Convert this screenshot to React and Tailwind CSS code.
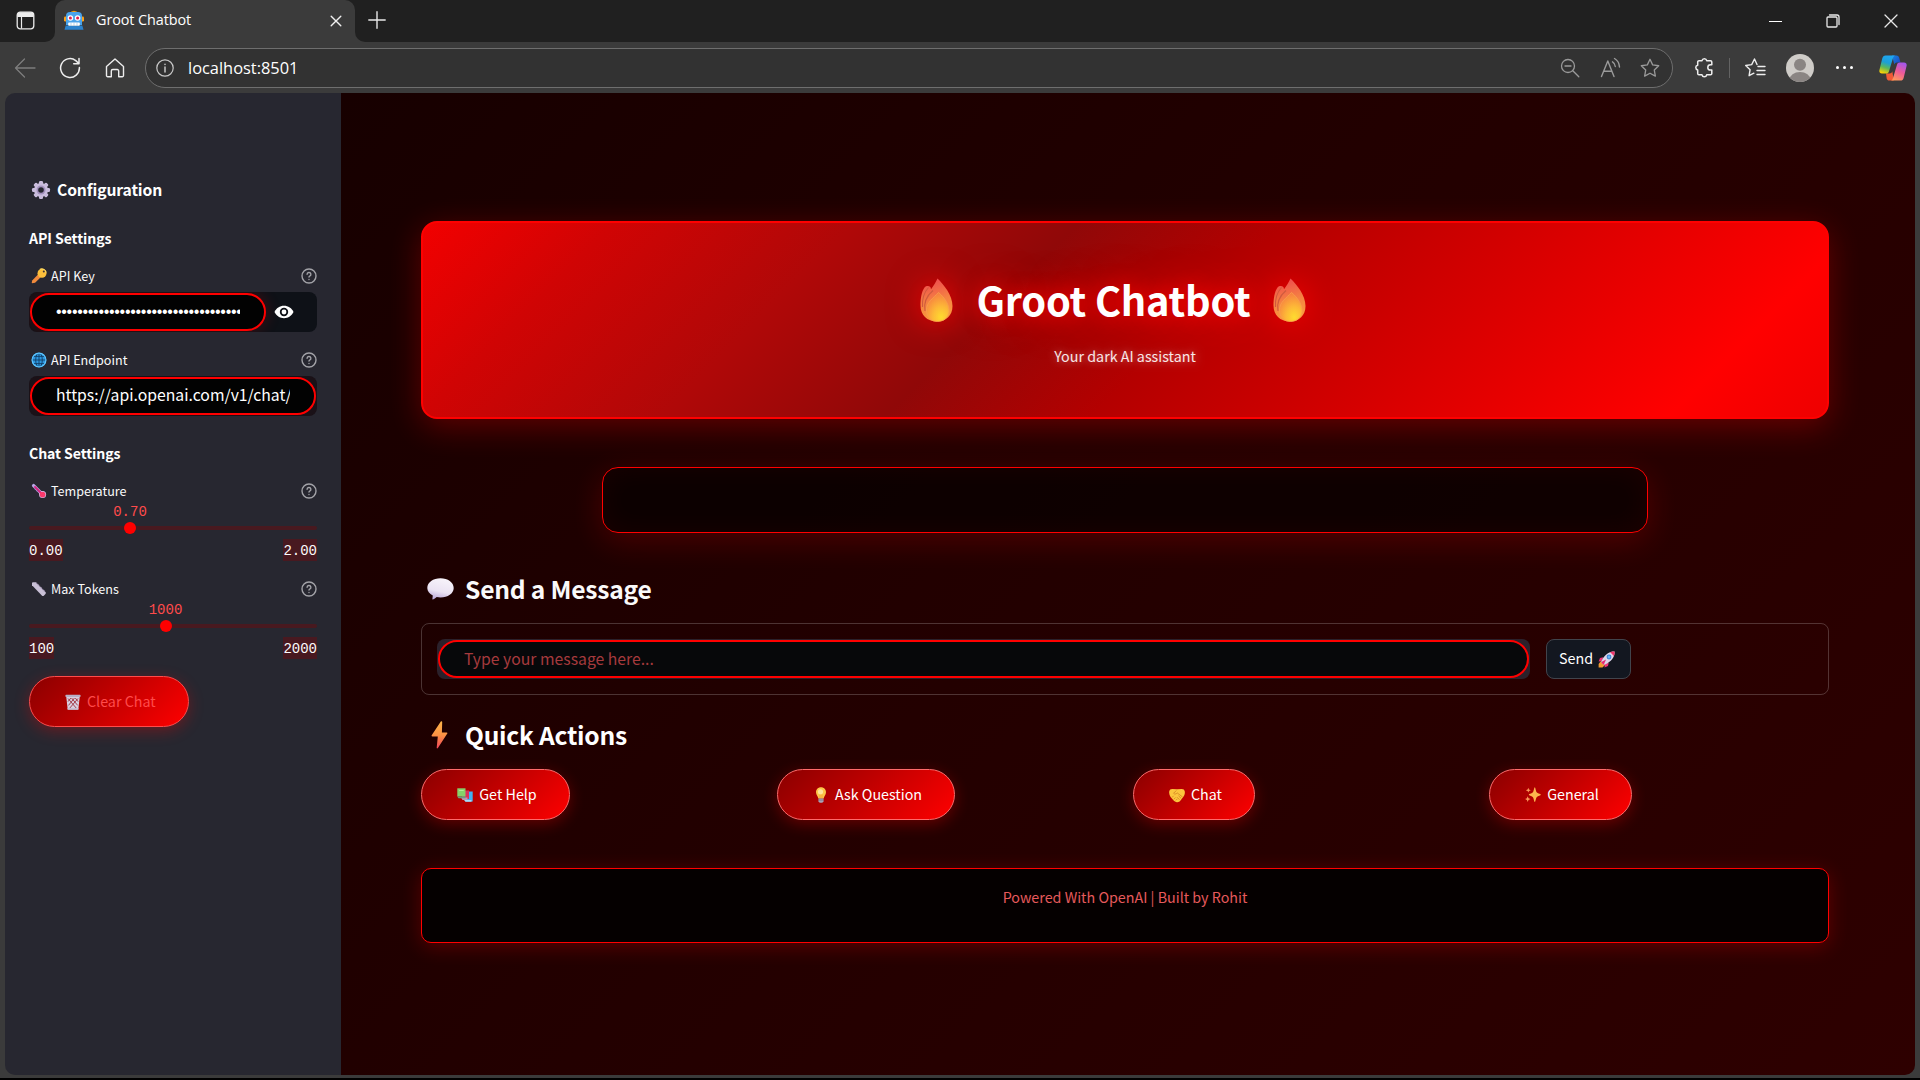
import React from "react";

const SANS = "font-['Noto_Sans_CJK_SC','Noto_Sans',sans-serif]";
const UI = "font-['Open_Sans','Noto_Sans',sans-serif]";
const MONO = "font-['Liberation_Mono',monospace]";

/* ---------- emoji drawings ---------- */

function Robot({ className }) {
  return (
    <svg viewBox="0 0 20 20" className={className}>
      <path d="M5 3.5Q10-2 15 3.5z" fill="#f59e0b" />
      <rect x="0" y="6.5" width="3" height="5" rx="1.2" fill="#f9a01b" />
      <rect x="17" y="6.5" width="3" height="5" rx="1.2" fill="#f9a01b" />
      <path d="M2 6a4 4 0 0 1 4-4h8a4 4 0 0 1 4 4v9H2z" fill="#4aa3ea" />
      <path d="M.5 19.8l1.2-4.2h16.6l1.2 4.2z" fill="#2b82cc" />
      <circle cx="6.4" cy="8" r="2.8" fill="#fff" />
      <circle cx="13.6" cy="8" r="2.8" fill="#fff" />
      <circle cx="6.4" cy="8" r="1.5" fill="#e11d48" />
      <circle cx="13.6" cy="8" r="1.5" fill="#e11d48" />
      <rect x="4.2" y="12.6" width="11.6" height="3.2" rx=".8" fill="#fff" />
      <path d="M7 12.6v3.2M10 12.6v3.2M13 12.6v3.2" stroke="#8ab8dd" strokeWidth=".6" />
    </svg>
  );
}

function Gear({ className }) {
  return (
    <svg viewBox="0 0 20 20" className={className}>
      <g fill="#c9bcdc">
        {[0, 45, 90, 135].map((a) => (
          <rect key={a} x="8" y="1" width="4" height="18" rx="1.2" transform={`rotate(${a} 10 10)`} />
        ))}
        <circle cx="10" cy="10" r="7" />
      </g>
      <circle cx="10" cy="10" r="4.5" fill="#a391bd" />
      <circle cx="10" cy="10" r="2.8" fill="#272730" />
    </svg>
  );
}

function Key({ className }) {
  return (
    <svg viewBox="0 0 16 16" className={className}>
      <path d="M7.500 6l2.700 2.700-6.100 6.100-2.900.5-.5-.6.5-2.200z" fill="#f08a3c" />
      <circle cx="11" cy="5.200" r="4.500" fill="#fcbf3b" />
      <path d="M9 1.200a4.600 4.600 0 0 1 6.200 3.400" stroke="#ffd95e" strokeWidth="1.2" fill="none" />
      <circle cx="12.800" cy="3.500" r="1" fill="#3a3138" />
    </svg>
  );
}

function Globe({ className }) {
  return (
    <svg viewBox="0 0 16 16" className={className}>
      <circle cx="8" cy="8" r="7.3" fill="#2d97df" />
      <g fill="none" stroke="#123f66" strokeWidth=".9">
        <ellipse cx="8" cy="8" rx="3.3" ry="7.2" />
        <path d="M8 .8v14.4M.8 8h14.4M2 4.4h12M2 11.6h12" />
      </g>
      <circle cx="8" cy="8" r="6.900" fill="none" stroke="#5ec6ff" strokeWidth="1.200" />
    </svg>
  );
}

function Thermometer({ className }) {
  return (
    <svg viewBox="0 0 16 16" className={className}>
      <path d="M2.6 2.6L11 11" stroke="#b9a4e6" strokeWidth="3.400" strokeLinecap="round" />
      <circle cx="11.6" cy="11.6" r="3.500" fill="#d9c8f5" />
      <path d="M4 4L11 11" stroke="#d9247f" strokeWidth="1.900" strokeLinecap="round" />
      <circle cx="11.6" cy="11.6" r="2.900" fill="#fa3a6c" />
      <path d="M3.4 6.2l1.2-1M5.6 8.4l1.2-1" stroke="#6d4f9c" strokeWidth=".8" />
    </svg>
  );
}

function Ruler({ className }) {
  return (
    <svg viewBox="0 0 16 16" className={className}>
      <path d="M1.6 1.3h3.3l9.8 9.9v1.6l-2.2 2.2h-1.2L1 4.2V2z" fill="#c9c0d6" />
      <path d="M5.2 1.8l9.2 9.3" stroke="#9587a8" strokeWidth="1.2" strokeDasharray="1 1.2" />
    </svg>
  );
}

function Basket({ className }) {
  return (
    <svg viewBox="0 0 16 16" className={className}>
      <path d="M1.2 2.2h13.6l-1.5 13.2H2.7z" fill="#d8cfe0" />
      <path d="M3 4.5l8.600 10M6.500 4l6.200 7.400M10.300 4l2.800 3.600M13 4.500l-8.600 10M9.500 4l-6 7.400M5.800 4L3 7.600" stroke="#9c2836" strokeWidth=".85" />
      <rect x=".4" y=".8" width="15.2" height="2.2" rx=".8" fill="#b9afc6" />
      <rect x="2.5" y="14" width="11" height="1.7" rx=".6" fill="#c9bfd2" />
    </svg>
  );
}

function Fire({ className, id }) {
  return (
    <svg viewBox="0 0 33 44" className={className}>
      <defs>
        <linearGradient id={`${id}a`} x1=".4" y1="0" x2=".6" y2="1">
          <stop offset="0" stopColor="#ee4a4f" />
          <stop offset=".5" stopColor="#f58142" />
          <stop offset="1" stopColor="#fb9f3c" />
        </linearGradient>
        <radialGradient id={`${id}b`} cx=".65" cy=".85" r=".8">
          <stop offset="0" stopColor="#fedb2f" />
          <stop offset=".45" stopColor="#fdb937" />
          <stop offset="1" stopColor="#f78440" />
        </radialGradient>
      </defs>
      <path d="M17.500.5C24 7 32.500 17 32.500 28c0 9.500-6.500 15.500-15.500 15.500C7 43.500.5 37 .5 27.500.5 21 1.500 13.500 4.500 9.500c2-2 4.500-1.700 6-.2.300.7.400 1.200.5 1.900C13.500 8 15.500 4.500 17.500.5z" fill={`url(#${id}a)`} />
      <path d="M8.500 9.500C3.500 15 2 22 2.500 29M13 12.500C6.500 18 3.500 25 5 33" stroke="#cf5a3e" strokeWidth="1.100" fill="none" />
      <path d="M18.500 14.500C25 20 29.500 27 29 33.500c-.5 6-5 10-11.500 10S6.500 39 6.500 32c0-8 7-12 12-17.500z" fill={`url(#${id}b)`} stroke="#f9a04c" strokeWidth=".8" />
    </svg>
  );
}

function Bubble({ className }) {
  return (
    <svg viewBox="0 0 27 22" className={className}>
      <defs>
        <linearGradient id="bub" x1=".6" y1="0" x2=".3" y2="1">
          <stop offset="0" stopColor="#f7f3fa" />
          <stop offset=".6" stopColor="#ebe3f3" />
          <stop offset="1" stopColor="#b9a5d8" />
        </linearGradient>
      </defs>
      <path d="M13.500.3C20.800.3 26.700 4.500 26.700 10s-5.900 9.500-13.200 9.500c-1.300 0-2.600-.1-3.800-.4-1.200 1-2.500 2-3.700 2.400-.6.2-.8-.3-.6-.8l.4-3.200C2.400 15.800.3 13 .3 10 .3 4.500 6.200.3 13.500.3z" fill="url(#bub)" />
    </svg>
  );
}

function Bolt({ className }) {
  return (
    <svg viewBox="0 0 17 28" className={className}>
      <defs>
        <linearGradient id="blt" x1=".5" y1="0" x2=".5" y2="1">
          <stop offset="0" stopColor="#fdb54a" />
          <stop offset=".5" stopColor="#fb9344" />
          <stop offset="1" stopColor="#f0435a" />
        </linearGradient>
      </defs>
      <path d="M9.800.6L.7 14.300c-.4.700 0 1.200.7 1.200h5.400L5.700 26.800c0 .9.700 1 1.200.3l9.400-14.500c.4-.7.100-1.200-.7-1.200h-4.700L11.200 1c0-.9-.9-1.100-1.400-.4z" fill="url(#blt)" />
    </svg>
  );
}

function Books({ className }) {
  return (
    <svg viewBox="0 0 16 16" className={className}>
      <path d="M8.500 4.500H15.700V14.500H8.500z" fill="#3fb1f3" />
      <path d="M7 13h7.500v1.700H8.500z" fill="#a7dcf9" />
      <path d="M5 3.500h7V12H5z" fill="#dc2f5c" />
      <path d="M4 10.500h6.500V13H5.500z" fill="#b89ab8" />
      <path d="M.3 1.300h8.200v8.200H.3z" fill="#86d169" />
      <path d="M.3 9.500h8.200V11.200H1.500z" fill="#6b9f80" />
      <path d="M2.200 3.500h4.500" stroke="#b2eb97" strokeWidth="1" />
    </svg>
  );
}

function Bulb({ className }) {
  return (
    <svg viewBox="0 0 16 16" className={className}>
      <path d="M8 .2c3 0 5 2.200 5 5 0 2.600-2 4-2.400 6.300H5.400C5 9.200 3 7.800 3 5.200 3 2.400 5 .2 8 .2z" fill="#fcc648" />
      <circle cx="7.500" cy="4.800" r="2.600" fill="#ffe59a" />
      <path d="M7 11V7.500M9 11V7.500" stroke="#f19b33" strokeWidth=".7" />
      <path d="M5.500 11.500h5v3L9.300 15.800H6.700L5.500 14.500z" fill="#a9a3b6" />
      <path d="M5.500 13h5" stroke="#726a83" strokeWidth=".8" />
    </svg>
  );
}

function Handshake({ className }) {
  return (
    <svg viewBox="0 0 16 16" className={className}>
      <path d="M.2 4.500C.5 2.800 1.600 2 3.200 2L8 2.300 12.800 2c1.600 0 2.700.8 3 2.500.3 2-.4 4-1.600 5.600l-2.700 3.400c-1 1.400-2.600 2-4.400 1.500-1.600-.5-2.900-1.700-4-3.200C1.300 9.800-.2 7.300.2 4.500z" fill="#fcc53d" />
      <path d="M7.300 3.500L4.600 6.300c.8 1.200 2.400.9 3.600-.4L13.500 10M3 10.500l1.600-1.700M4.800 12.300l1.800-1.800M6.900 13.300l1.500-1.500M9.500 8.800l2.800 2.700M8 10.200l2.500 2.500" stroke="#cf7f22" strokeWidth=".75" fill="none" />
    </svg>
  );
}

function Sparkles({ className }) {
  return (
    <svg viewBox="0 0 16 16" className={className}>
      <g fill="#fdb64c">
        <path d="M9.800.3c.7 0 .9 4 2.100 5.300 1.200 1.200 3.900 1.300 3.900 2.100s-2.700.9-3.900 2.200c-1.200 1.300-1.400 5-2.100 5s-.9-3.700-2.100-5C6.500 8.600 3.800 8.500 3.800 7.700s2.700-.9 3.900-2.100C8.900 4.300 9.100.3 9.800.3z" />
        <path d="M3.300.8l.7 1.700 1.800.7L4 3.900l-.7 1.700-.7-1.700-1.800-.7 1.800-.7z" fill="#fb9a5a" />
        <path d="M2.700 9.300l.8 2 2 .8-2 .8-.8 2-.8-2-1.800-.8 1.800-.8z" fill="#fb9a5a" />
      </g>
    </svg>
  );
}

function Rocket({ className }) {
  return (
    <svg viewBox="0 0 17 17" className={className}>
      <path d="M5.200 6.300L2 7 .6 10.500l3.500-.4zM10.700 11.800L10 15l-3.500 1.600.4-3.700z" fill="#ef3176" />
      <path d="M3 10l4 4-2.500 2.500L.6 16.600l0-3.600z" fill="#f59b31" />
      <path d="M16.600.4c-4.600-.2-8.300 1.700-12 7.400L3 11.300 5.700 14l3.500-1.600c5.700-3.700 7.600-7.400 7.400-12z" fill="#ded6ea" />
      <path d="M16.600.4c-1.700-.1-3.200.1-4.600.7l3.900 3.900c.6-1.400.8-2.900.7-4.600z" fill="#f2356b" />
      <circle cx="11" cy="6" r="2.400" fill="#3f83d4" />
      <circle cx="11" cy="6" r="1.400" fill="#66b6f5" />
      <path d="M3 11.300L8 8.500 5.700 14z" fill="#e82b72" />
    </svg>
  );
}

/* ---------- browser icons ---------- */

function Line({ children, size, className, w = 1.3 }) {
  return (
    <svg width={size} height={size} viewBox={`0 0 ${size} ${size}`} fill="none" stroke="currentColor" strokeWidth={w} strokeLinecap="round" strokeLinejoin="round" className={className}>
      {children}
    </svg>
  );
}

function Copilot() {
  return (
    <svg width="28" height="26" viewBox="0 0 28 26">
      <defs>
        <linearGradient id="cpa" x1=".6" y1="0" x2=".3" y2="1">
          <stop offset="0" stopColor="#1fa6f2" />
          <stop offset=".4" stopColor="#1c9fd6" />
          <stop offset=".68" stopColor="#5cb85a" />
          <stop offset="1" stopColor="#fbd104" />
        </linearGradient>
        <linearGradient id="cpb" x1=".7" y1="0" x2=".3" y2="1">
          <stop offset="0" stopColor="#a456ea" />
          <stop offset=".5" stopColor="#ee5b97" />
          <stop offset="1" stopColor="#ff9a5c" />
        </linearGradient>
        <linearGradient id="cpc" x1="0" y1="0" x2="1" y2="1">
          <stop offset="0" stopColor="#1787e0" />
          <stop offset="1" stopColor="#1e3fc0" />
        </linearGradient>
      </defs>
      <path d="M13 .4h4.300c1.500 0 2.400.8 2.800 2.200l1.400 4.900h-3.600c-1.300 0-2.200.8-2.600 2.100z" fill="url(#cpc)" />
      <path d="M7 18.500h3.500c1.500 0 2.300-.8 2.800-2.200l1.500 9.300h-4.500c-1.400 0-2.300-.8-2.600-2.100z" fill="#f25a36" />
      <path d="M6.600.4h9.700c-1.300.2-1.900 1.300-2.300 2.600l-4 13.200c-.4 1.400-1.300 2.300-2.800 2.300H3C.8 18.500-.1 17 .5 14.800L3.300 3.300C3.800 1.400 4.800.4 6.600.4z" fill="url(#cpa)" />
      <path d="M21.400 25.600h-9.700c1.300-.2 1.900-1.300 2.300-2.600l4-13.200c.4-1.400 1.300-2.300 2.800-2.300H25c2.200 0 3.100 1.500 2.500 3.700l-2.800 11.500c-.5 1.900-1.500 2.900-3.300 2.900z" fill="url(#cpb)" />
    </svg>
  );
}

function TitleBar() {
  return (
    <div className="flex h-[42px] shrink-0 bg-[#202020]">
      <div className="w-[55px] bg-[#3b3b3b]">
        <div className="flex h-full items-center rounded-br-[10px] bg-[#202020] pl-4 pb-0.5 text-[#ececec]">
          <svg width="19" height="19" viewBox="0 0 19 19" fill="none">
            <rect x="1.200" y="1.200" width="16.600" height="16.600" rx="3" stroke="currentColor" strokeWidth="1.300" />
            <path d="M1.200 4.200a3 3 0 0 1 3-3h10.600a3 3 0 0 1 3 3v1.800H1.200z" fill="currentColor" />
            <path d="M5.500 5v12.500" stroke="currentColor" strokeWidth="1.200" />
          </svg>
        </div>
      </div>
      <div className="w-[300px] bg-[#202020]">
        <div className="flex h-full items-center rounded-t-[10px] bg-[#3b3b3b] pl-[9px] pb-[3px] pr-[13px]">
          <Robot className="h-5 w-5" />
          <span className={`ml-3 flex-1 whitespace-nowrap text-[14.400px] leading-5 tracking-[-0.080px] text-white ${UI}`}>Groot Chatbot</span>
          <Line size={12} className="mt-0.5 text-[#f0f0f0]" w={1.4}><path d="M1.200 1.200l9.600 9.600M10.800 1.200L1.200 10.800" /></Line>
        </div>
      </div>
      <div className="flex-1 bg-[#3b3b3b]">
        <div className="flex h-full items-center rounded-bl-[10px] bg-[#202020] pl-[13px] text-[#e8e8e8]">
          <Line size={18} className="mb-[3px]" w={1.4}><path d="M9 .8v16.400M.8 9h16.400" /></Line>
          <div className="flex-1" />
          <div className="mr-[44px] h-[1px] w-[13px] bg-white" />
          <Line size={14} className="mr-[44px]" w={1.3}>
            <rect x="1" y="3" width="10" height="10" rx="1" />
            <path d="M3.500 1H11a2 2 0 0 1 2 2v7.500" />
          </Line>
          <Line size={14} className="mr-[22px]" w={1.3}><path d="M1 1l12 12M13 1L1 13" /></Line>
        </div>
      </div>
    </div>
  );
}

const STAR = "M10 1.300l2.650 5.600 6.050.850-4.400 4.300 1.070 6.100L10 15.250 4.630 18.150 5.700 12.050 1.300 7.750l6.050-.850z";

function Toolbar() {
  return (
    <div className="flex h-[51px] shrink-0 items-center bg-[#3b3b3b] pl-[14px] text-[#ededed]">
      <Line size={22} className="text-[#7d7d7d]" w={1.3}><path d="M21 11H1.500M10.500 2L1.500 11l9 9" /></Line>
      <Line size={22} className="ml-[23px]" w={1.5}>
        <path d="M20.400 10.500A9.400 9.400 0 1 1 16.800 3.600L19.800 6.500M20 1.500v5.300h-5.300" />
      </Line>
      <Line size={20} className="ml-[24px]" w={1.4}>
        <path d="M1.500 8.500L10 1l8.500 7.500v9a1.200 1.200 0 0 1-1.200 1.200h-3.600V13a1.500 1.500 0 0 0-1.500-1.500H7.800A1.500 1.500 0 0 0 6.300 13v5.700H2.700a1.200 1.200 0 0 1-1.200-1.200z" />
      </Line>
      <div className="ml-5 flex h-10 w-[1528px] items-center rounded-full border border-[#6e6e6e] bg-[#323232] pl-2.5">
        <Line size={18} className="text-[#c8c8c8]" w={1.2}>
          <circle cx="9" cy="9" r="8.200" />
          <path d="M9 8v5M9 5.300v.1" strokeWidth="1.500" />
        </Line>
        <span className={`ml-3.5 flex-1 whitespace-nowrap text-[16.400px] leading-6 text-white ${UI}`}>localhost:8501</span>
        <div className="flex items-center text-[#9a9a9a]">
          <Line size={20} w={1.3}><circle cx="8" cy="8" r="6.500" /><path d="M12.800 12.800l6 6M5 8h6" /></Line>
          <Line size={22} className="ml-5" w={1.4}>
            <path d="M1.500 19.500L7.800 4l6.200 15.500M3.700 14.200h8.200M12.500 4.800a6 6 0 0 1 2.800 4.700M14.500 1.500a10.500 10.500 0 0 1 5 8.500" />
          </Line>
          <Line size={20} className="ml-[18px] mr-3" w={1.3}><path d={STAR} /></Line>
        </div>
      </div>
      <Line size={21} className="ml-[21px]" w={1.5}>
        <path d="M5 3.700h3a2.400 2.400 0 0 1 4.700 0h3.800a1.300 1.300 0 0 1 1.300 1.300v2.700h-1.300a2.700 2.700 0 0 0 0 5.400h1.300v3.400a1.300 1.300 0 0 1-1.300 1.300h-3.800a2.400 2.400 0 0 1-4.700 0H5a1.300 1.300 0 0 1-1.300-1.300v-3.600a2.400 2.400 0 0 1 0-4.700V5A1.300 1.300 0 0 1 5 3.700z" />
      </Line>
      <div className="ml-[14px] h-5 w-px bg-[#636363]" />
      <Line size={22} className="ml-[14px]" w={1.4}>
        <path d="M13 7.500L10.500 2 7.700 7.600l-6 .9 4.400 4.200-1 6 4.800-2.500M14 9.500h7M13 13.500h8M13 17.500h8" />
      </Line>
      <svg width="28" height="28" viewBox="0 0 28 28" className="ml-[20px]">
        <clipPath id="av"><circle cx="14" cy="14" r="14" /></clipPath>
        <g clipPath="url(#av)">
          <rect width="28" height="28" fill="#cfccc8" />
          <circle cx="14" cy="10.800" r="6" fill="#8a8583" />
          <ellipse cx="14" cy="26" rx="10.500" ry="8" fill="#8a8583" />
        </g>
      </svg>
      <div className="ml-[22px] flex gap-[4px]">
        <i className="h-[3px] w-[3px] rounded-full bg-white" />
        <i className="h-[3px] w-[3px] rounded-full bg-white" />
        <i className="h-[3px] w-[3px] rounded-full bg-white" />
      </div>
      <div className="ml-[26px]"><Copilot /></div>
    </div>
  );
}

/* ---------- sidebar ---------- */

function Label({ icon, text, className }) {
  return (
    <div className={`flex h-5 items-center text-[#fafafa] ${className}`}>
      <div className="w-[22px] pl-0.5">{icon}</div>
      <span className="flex-1 whitespace-nowrap text-[12.600px] leading-5">{text}</span>
      <svg width="16" height="16" viewBox="0 0 16 16" fill="none" stroke="#a3a3a8" strokeWidth="1.400" strokeLinecap="round">
        <circle cx="8" cy="8" r="7" />
        <path d="M6.100 6.300a1.900 1.900 0 1 1 2.600 1.800c-.5.200-.7.500-.7 1M8 11.400v.1" />
      </svg>
    </div>
  );
}

function Slider({ value, min, max, pos }) {
  return (
    <div className={MONO}>
      <div className="relative h-[17px] pt-0.5 text-[14px] leading-[18px] text-[#ff4b4b]">
        <span className="absolute -translate-x-1/2" style={{ left: pos }}>{value}</span>
      </div>
      <div className="relative flex h-5 items-center">
        <div className="h-1 w-full rounded-full bg-[#48191f]" />
        <div className="absolute h-3 w-3 -translate-x-1/2 rounded-full bg-[#ff0000]" style={{ left: pos }} />
      </div>
      <div className="mt-px flex h-[22px] justify-between text-[14px] leading-[20px] text-[#fafafa]">
        <span className="bg-[#481920] pt-0.5">{min}</span>
        <span className="bg-[#481920] pt-0.5">{max}</span>
      </div>
    </div>
  );
}

function Sidebar() {
  return (
    <aside className="flex w-[336px] shrink-0 flex-col bg-[#272730] px-6 pt-[85px]">
      <div className="flex h-6 items-center text-white">
        <Gear className="ml-0.5 mr-1.5 h-5 w-5" />
        <span className="whitespace-nowrap text-[15.700px] font-bold leading-6 tracking-[-0.120px]">Configuration</span>
      </div>
      <div className="mt-[26px] h-5 whitespace-nowrap text-[14.100px] font-bold leading-5 tracking-[-0.080px] text-white">API Settings</div>
      <Label className="mt-[18px]" icon={<Key className="h-4 w-4" />} text="API Key" />
      <div className="mt-1.5 flex h-10 items-center overflow-hidden rounded-lg bg-[#0e1117]">
        <div className="ml-px flex h-[38px] w-[236px] items-center rounded-full border-2 border-[#ff0000] bg-[#020202] px-6 shadow-[0_0_15px_rgba(255,0,0,0.22)]">
          <span className="w-full overflow-hidden whitespace-nowrap font-['Liberation_Sans',sans-serif] text-[16px] leading-5 tracking-[-0.300px] text-white">•••••••••••••••••••••••••••••••••••</span>
        </div>
        <svg width="20" height="14" viewBox="0 0 20 14" className="ml-[8px]">
          <path d="M10 .8c4.200 0 7.800 2.500 9.500 6.200-1.700 3.700-5.300 6.200-9.500 6.200S2.200 10.700.5 7C2.200 3.300 5.800.8 10 .8z" fill="#fff" />
          <circle cx="10" cy="7" r="4.200" fill="#0e1117" />
          <circle cx="10" cy="7" r="2.400" fill="#fff" />
        </svg>
      </div>
      <Label className="mt-[18px]" icon={<Globe className="h-4 w-4" />} text="API Endpoint" />
      <div className="mt-1.5 flex h-10 items-center overflow-hidden rounded-lg bg-[#1a1117]">
        <div className="mx-px flex h-[38px] flex-1 items-center overflow-hidden rounded-full border-2 border-[#ff0000] bg-[#020202] px-6">
          <span className="mb-0.5 w-full overflow-hidden whitespace-nowrap text-[15.750px] leading-6 text-white">https://api.openai.com/v1/chat/</span>
        </div>
      </div>
      <div className="mt-[27px] h-5 whitespace-nowrap text-[14.100px] font-bold leading-5 tracking-[-0.080px] text-white">Chat Settings</div>
      <Label className="mt-[18px]" icon={<Thermometer className="h-4 w-4" />} text="Temperature" />
      <Slider value="0.70" min="0.00" max="2.00" pos="101px" />
      <Label className="mt-[18px]" icon={<Ruler className="h-4 w-4" />} text="Max Tokens" />
      <Slider value="1000" min="100" max="2000" pos="136.5px" />
      <button className="mt-[17px] flex h-[51px] w-[160px] items-center rounded-full border border-[#ff4b4b] bg-linear-135 from-[#8b0000] to-[#ff0000] pl-[35px] text-[#ff4b4b] shadow-[0_4px_15px_rgba(255,0,0,0.3)]">
        <Basket className="h-4 w-4" />
        <span className="mb-0.5 ml-1.5 whitespace-nowrap text-[14.300px] leading-6">Clear Chat</span>
      </button>
    </aside>
  );
}

/* ---------- main ---------- */

const ACTIONS = [
  { Icon: Books, text: "Get Help", width: "w-[149px]" },
  { Icon: Bulb, text: "Ask Question", width: "w-[178px]" },
  { Icon: Handshake, text: "Chat", width: "w-[122px]" },
  { Icon: Sparkles, text: "General", width: "w-[143px]" },
];

function Main() {
  return (
    <main className="flex flex-1 flex-col bg-[linear-gradient(135deg,#170000_0%,#220000_42%,#2e0000_100%)] pl-20 pr-[86px] pt-32">
      <header className="flex h-[198px] flex-col items-center rounded-2xl border-2 border-[#ff0000] bg-[linear-gradient(135deg,#f20000_0%,#d00404_12%,#b00808_27%,#900808_41%,#b40000_54%,#ff0000_90%,#ee0000_100%)] pt-[47px] shadow-[0_8px_32px_rgba(255,0,0,0.3)]">
        <div className="flex h-[60px] items-center pr-6">
          <Fire id="fl" className="h-11 w-[33px] drop-shadow-[0_0_16px_rgba(255,0,0,1)]" />
          <h1 className="mb-0.5 ml-[23px] mr-[22px] whitespace-nowrap text-[39.800px] font-bold leading-[60px] tracking-[-0.230px] text-white [text-shadow:0_0_20px_rgba(255,0,0,0.9),0_0_40px_rgba(255,0,0,0.9)]">Groot Chatbot</h1>
          <Fire id="fr" className="h-11 w-[33px] drop-shadow-[0_0_16px_rgba(255,0,0,1)]" />
        </div>
        <p className="mt-3.5 whitespace-nowrap text-[14.300px] leading-6 text-white/90 [text-shadow:0_0_10px_rgba(255,255,255,0.5)]">Your dark AI assistant</p>
      </header>
      <section className="mx-auto mt-12 h-[66px] w-[1046px] shrink-0 rounded-2xl border border-[#ff0000] bg-[#000000]/60 shadow-[0_8px_32px_rgba(255,0,0,0.2),inset_0_0_30px_rgba(255,0,0,0.06)]" />
      <div className="mt-[38px] flex h-9 items-center">
        <Bubble className="ml-1.5 h-[22px] w-[27px]" />
        <h2 className="mb-0.5 ml-[11px] whitespace-nowrap text-[24.600px] font-bold leading-9 tracking-[-0.220px] text-[#fafafa]">Send a Message</h2>
      </div>
      <form className="mt-4 flex h-[72px] items-center rounded-lg border border-white/20 pl-[15px]">
        <div className="flex h-10 w-[1093px] items-center rounded-lg bg-[#2b212b] px-px">
          <div className="flex h-[38px] flex-1 items-center rounded-full border-2 border-[#ff0000] bg-[#07080a] pl-6">
            <span className="whitespace-nowrap text-[15.750px] leading-6 text-[#a63a3d]">Type your message here...</span>
          </div>
        </div>
        <button type="button" className="ml-4 flex h-10 w-[85px] items-center rounded-lg border border-[#41444c] bg-[#131720] pl-3 text-white">
          <span className="mb-0.5 whitespace-nowrap text-[14.300px] leading-6">Send</span>
          <Rocket className="ml-[5px] h-[17px] w-[17px]" />
        </button>
      </form>
      <div className="mt-[22px] flex h-9 items-center">
        <Bolt className="ml-2.5 h-7 w-[17px]" />
        <h2 className="mb-0.5 ml-[17px] whitespace-nowrap text-[24.600px] font-bold leading-9 tracking-[-0.250px] text-white">Quick Actions</h2>
      </div>
      <div className="mt-4 grid grid-cols-[repeat(4,340px)] gap-4">
        {ACTIONS.map(({ Icon, text, width }) => (
          <button key={text} className={`flex h-[51px] items-center justify-center rounded-full border border-[#ff6b6b] bg-linear-135 from-[#8b0000] to-[#ff0000] pl-[3px] text-white shadow-[0_4px_15px_rgba(255,0,0,0.3)] ${width}`}>
            <Icon className="h-4 w-4" />
            <span className="mb-0.5 ml-1.5 whitespace-nowrap text-[14.300px] leading-6">{text}</span>
          </button>
        ))}
      </div>
      <footer className="mt-12 flex h-[75px] justify-center rounded-[10px] border border-[#ff0000] bg-[#050000] pt-4 shadow-[0_4px_20px_rgba(255,0,0,0.25)]">
        <p className="whitespace-nowrap text-[14.300px] leading-6 text-[#e65a5c]">Powered With OpenAI | Built by Rohit</p>
      </footer>
    </main>
  );
}

export default function App() {
  return (
    <div className={`flex h-[1080px] w-[1920px] flex-col overflow-hidden border-b-2 border-black bg-[#3b3b3b] ${SANS}`}>
      <TitleBar />
      <Toolbar />
      <div className="mx-[5px] mb-[3px] flex flex-1 overflow-hidden rounded-[10px]">
        <Sidebar />
        <Main />
      </div>
    </div>
  );
}
